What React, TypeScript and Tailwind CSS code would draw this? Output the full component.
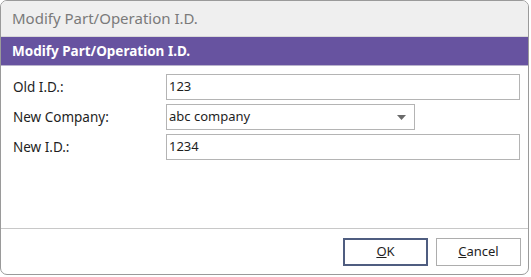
import React from 'react';

const font = { fontFamily: '"Noto Sans", "Open Sans", sans-serif' };

const Field: React.FC<{ label: string; children: React.ReactNode }> = ({ label, children }) => (
  <div className="flex items-center h-[26px]">
    <div className="w-[154px] pl-[1px] pt-[1px] text-[13.5px] text-[#1e1e1e]">{label}</div>
    {children}
  </div>
);

const App: React.FC = () => {
  return (
    <div className="w-[531px] h-[277px] bg-white" style={font}>
      <div className="w-[529px] h-[275px] flex flex-col border border-[#9a9a9a] rounded-[7px] overflow-hidden bg-white">
        <div className="h-[36px] shrink-0 bg-[#efefef] border-b border-[#d8d8d8] flex items-center pl-[11px]">
          <span className="text-[15px] text-[#7a7a7a]">Modify Part/Operation I.D.</span>
        </div>
        <div className="h-[29px] shrink-0 bg-[#6753a0] border-b border-[#b9b3cc] flex items-center pl-[11px]">
          <span className="text-[13.5px] font-bold text-white">Modify Part/Operation I.D.</span>
        </div>
        <div className="flex flex-col gap-[4px] pt-[8px] pl-[11px] pr-[8px]">
          <Field label="Old I.D.:">
            <div className="w-[354px] h-[26px] border border-[#b4b4b4] flex items-center px-[2px] text-[13px] text-[#1e1e1e]">123</div>
          </Field>
          <Field label="New Company:">
            <div className="w-[249px] h-[26px] border border-[#b4b4b4] flex items-center justify-between px-[2px] text-[13px] text-[#1e1e1e]">
              <span>abc company</span>
              <svg width="9" height="5" viewBox="0 0 9 5" className="mr-[6px]">
                <path d="M0 0h9L4.5 5z" fill="#6a6a6a" />
              </svg>
            </div>
          </Field>
          <Field label="New I.D.:">
            <div className="w-[354px] h-[26px] border border-[#b4b4b4] flex items-center px-[2px] text-[13px] text-[#1e1e1e]">1234</div>
          </Field>
        </div>
        <div className="flex-1" />
        <div className="h-[46px] shrink-0 border-t border-[#c8c8c8] flex justify-end items-start gap-[8px] pt-[9px] pr-[7px]">
          <button className="w-[85px] h-[28px] border-2 border-[#4f5d80] bg-white text-[13px] text-[#1e1e1e]">
            <span className="underline">O</span>K
          </button>
          <button className="w-[85px] h-[28px] border border-[#adadad] bg-white text-[13px] text-[#1e1e1e]">
            <span className="underline">C</span>ancel
          </button>
        </div>
      </div>
    </div>
  );
};

export default App;
